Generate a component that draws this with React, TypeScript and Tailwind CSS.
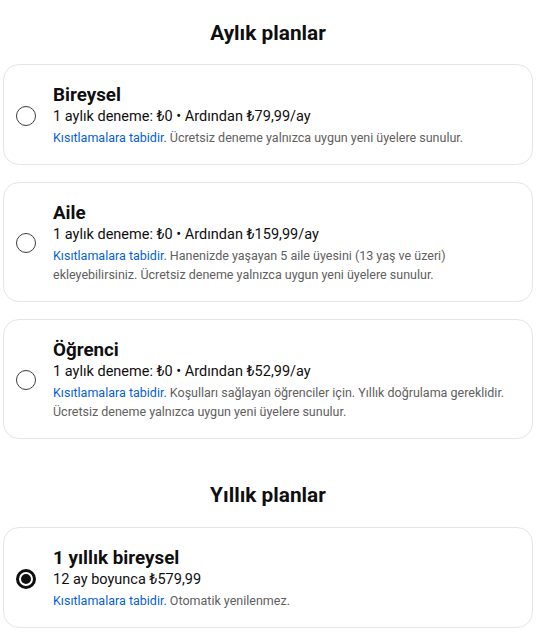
import React, { useState } from 'react';

interface Plan {
  id: string;
  title: string;
  price: string;
  note: string;
}

const monthly: Plan[] = [
  {
    id: 'individual',
    title: 'Bireysel',
    price: '1 aylık deneme: ₺0 • Ardından ₺79,99/ay',
    note: 'Ücretsiz deneme yalnızca uygun yeni üyelere sunulur.',
  },
  {
    id: 'family',
    title: 'Aile',
    price: '1 aylık deneme: ₺0 • Ardından ₺159,99/ay',
    note: 'Hanenizde yaşayan 5 aile üyesini (13 yaş ve üzeri) ekleyebilirsiniz. Ücretsiz deneme yalnızca uygun yeni üyelere sunulur.',
  },
  {
    id: 'student',
    title: 'Öğrenci',
    price: '1 aylık deneme: ₺0 • Ardından ₺52,99/ay',
    note: 'Koşulları sağlayan öğrenciler için. Yıllık doğrulama gereklidir. Ücretsiz deneme yalnızca uygun yeni üyelere sunulur.',
  },
];

const yearly: Plan[] = [
  {
    id: 'yearly',
    title: '1 yıllık bireysel',
    price: '12 ay boyunca ₺579,99',
    note: 'Otomatik yenilenmez.',
  },
];

const Radio: React.FC<{ checked: boolean }> = ({ checked }) =>
  checked ? (
    <span className="size-[20px] shrink-0 rounded-full border-[3px] border-[#0f0f0f] flex items-center justify-center">
      <span className="size-[10px] rounded-full bg-[#0f0f0f]" />
    </span>
  ) : (
    <span className="size-[20px] shrink-0 rounded-full border-[1.5px] border-[#3d3d3d]" />
  );

const PlanCard: React.FC<{ plan: Plan; checked: boolean; onSelect: () => void }> = ({ plan, checked, onSelect }) => (
  <button
    onClick={onSelect}
    className="w-full text-left flex items-center gap-[17px] pl-[12px] pr-4 pt-[19px] pb-[17px] rounded-[16px] border border-[#e5e5e5] bg-white"
  >
    <Radio checked={checked} />
    <div className="flex-1">
      <div className="text-[18.8px] leading-[22px] font-bold text-[#0f0f0f]">{plan.title}</div>
      <div className="text-[14.5px] leading-[22px] text-[#0f0f0f]">{plan.price}</div>
      <p className="text-[12.5px] leading-[19px] text-[#606060]">
        <span className="text-[#065fd4]">Kısıtlamalara tabidir.</span> {plan.note}
      </p>
    </div>
  </button>
);

export default function App() {
  const [selected, setSelected] = useState('yearly');

  return (
    <div className="w-[542px] min-h-[640px] bg-white pt-[19px] pl-[3px] pr-[9px] font-['Roboto',sans-serif]">
      <section>
        <h2 className="text-center text-[20.8px] leading-[28px] font-bold text-[#0f0f0f]">Aylık planlar</h2>
        <div className="mt-[17px] flex flex-col gap-[17px]">
          {monthly.map(p => (
            <PlanCard key={p.id} plan={p} checked={selected === p.id} onSelect={() => setSelected(p.id)} />
          ))}
        </div>
      </section>

      <section className="mt-[42px]">
        <h2 className="text-center text-[20.8px] leading-[28px] font-bold text-[#0f0f0f]">Yıllık planlar</h2>
        <div className="mt-[18px] flex flex-col gap-[17px]">
          {yearly.map(p => (
            <PlanCard key={p.id} plan={p} checked={selected === p.id} onSelect={() => setSelected(p.id)} />
          ))}
        </div>
      </section>
    </div>
  );
}
